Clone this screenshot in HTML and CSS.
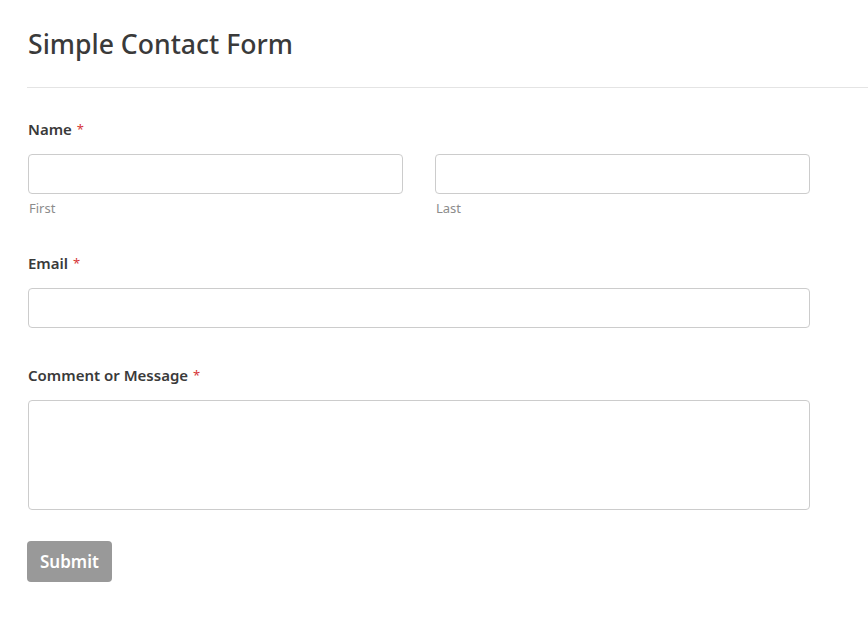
FILE: index.html
```html
<!DOCTYPE html>
<html lang="en">
<head>
  <meta charset="UTF-8" />
  <title>Simple Contact Form</title>
  <link rel="stylesheet" href="styles.css">
</head>
<body>
  <main class="page">
    <header class="page-header">
      <h1>Simple Contact Form</h1>
    </header>

    <form class="contact-form">
      <div class="field">
        <label class="field-label">Name <span class="required">*</span></label>
        <div class="name-row">
          <div class="name-part">
            <input type="text" class="input">
            <span class="sublabel">First</span>
          </div>
          <div class="name-part">
            <input type="text" class="input">
            <span class="sublabel">Last</span>
          </div>
        </div>
      </div>

      <div class="field">
        <label class="field-label">Email <span class="required">*</span></label>
        <input type="email" class="input">
      </div>

      <div class="field">
        <label class="field-label">Comment or Message <span class="required">*</span></label>
        <textarea class="input textarea"></textarea>
      </div>

      <button type="submit" class="submit">Submit</button>
    </form>
  </main>
</body>
</html>
```

FILE: styles.css
```css
body {
  margin: 0;
  padding: 0;
  background: #fff;
  color: #3a3a3a;
  font-family: "Noto Sans", "Open Sans", Arial, sans-serif;
}

.page {
  padding-left: 27px;
}

.page-header {
  border-bottom: 1px solid #e4e4e4;
  padding: 22px 0 21px 1px;
}

h1 {
  margin: 0;
  font-size: 26.6px;
  font-weight: 500;
  line-height: 44px;
  color: #3a3a3a;
}

.contact-form {
  width: 782px;
  padding: 31px 0 0 1px;
}

.field {
  margin-bottom: 37px;
}

.field:last-of-type {
  margin-bottom: 29px;
}

.field-label {
  display: block;
  font-size: 15px;
  font-weight: 600;
  line-height: 20px;
  margin-bottom: 15px;
}

.required {
  color: #d63637;
  font-size: 13px;
  font-weight: 400;
  vertical-align: 1px;
  margin-left: 1px;
}

.name-row {
  display: flex;
  gap: 32px;
}

.name-part {
  flex: 1;
  display: flex;
  flex-direction: column;
}

.input {
  box-sizing: border-box;
  width: 100%;
  height: 40px;
  border: 1px solid #ccc;
  border-radius: 4px;
  background: #fff;
  margin: 0;
  font: inherit;
}

.textarea {
  display: block;
  height: 110px;
  resize: none;
}

.sublabel {
  font-size: 13px;
  line-height: 16px;
  color: #8c8c8c;
  margin-top: 6px;
  padding-left: 1px;
}

.submit {
  margin-left: -1px;
  margin-top: 2px;
  background: #999;
  color: #fff;
  border: none;
  border-radius: 4px;
  font-family: inherit;
  font-size: 17px;
  font-weight: 600;
  height: 41px;
  padding: 0 13px;
}
```
